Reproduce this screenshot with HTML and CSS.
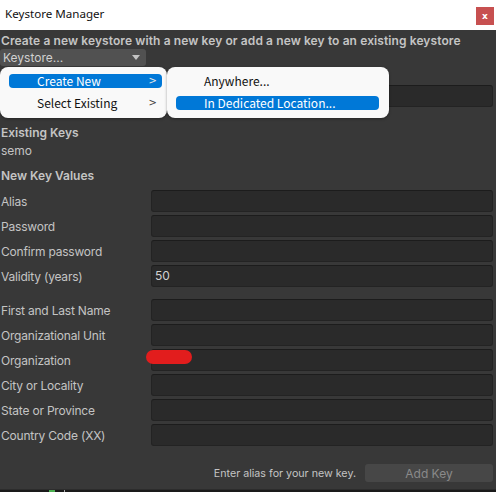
FILE: index.html
```html
<!DOCTYPE html>
<html>
<head>
<meta charset="utf-8">
<link rel="stylesheet" href="styles.css">
</head>
<body>
<div class="titlebar">
  <span class="title">Keystore Manager</span>
  <span class="close">x</span>
</div>
<div class="window">
  <div class="heading">Create a new keystore with a new key or add a new key to an existing keystore</div>
  <div class="dropdown"><span>Keystore...</span><span class="arrow"></span></div>
  <div class="row path-row"><span class="label"></span><span class="field"></span></div>
  <div class="bold existing">Existing Keys</div>
  <div class="plain">semo</div>
  <div class="bold newkey">New Key Values</div>
  <div class="group">
    <div class="row"><span class="label">Alias</span><span class="field"></span></div>
    <div class="row"><span class="label">Password</span><span class="field"></span></div>
    <div class="row"><span class="label">Confirm password</span><span class="field"></span></div>
    <div class="row"><span class="label">Validity (years)</span><span class="field">50</span></div>
  </div>
  <div class="group second">
    <div class="row"><span class="label">First and Last Name</span><span class="field"></span></div>
    <div class="row"><span class="label">Organizational Unit</span><span class="field"></span></div>
    <div class="row"><span class="label">Organization</span><span class="field"></span></div>
    <div class="row"><span class="label">City or Locality</span><span class="field"></span></div>
    <div class="row"><span class="label">State or Province</span><span class="field"></span></div>
    <div class="row"><span class="label">Country Code (XX)</span><span class="field"></span></div>
  </div>
  <div class="footer">
    <span class="hint">Enter alias for your new key.</span>
    <span class="button">Add Key</span>
  </div>
  <div class="redact"></div>
  <div class="menu menu-main">
    <div class="item active"><span>Create New</span><span class="chev">&gt;</span></div>
    <div class="item"><span>Select Existing</span><span class="chev">&gt;</span></div>
  </div>
  <div class="menu menu-sub">
    <div class="item"><span>Anywhere...</span></div>
    <div class="item active"><span>In Dedicated Location...</span></div>
  </div>
</div>
<div class="statusbar"><span class="green"></span><span class="tick"></span></div>
</body>
</html>
```
FILE: styles.css
```css
html, body {
  margin: 0;
  padding: 0;
}
body {
  width: 496px;
  height: 492px;
  overflow: hidden;
  background: #383838;
  font-family: Inter, "Noto Sans", sans-serif;
  font-size: 12px;
  color: #c4c4c4;
}
.titlebar {
  height: 30px;
  background: #ffffff;
  display: flex;
  align-items: center;
  justify-content: space-between;
  padding: 0 2px 0 5px;
  box-sizing: border-box;
}
.title {
  font-family: "Noto Sans", sans-serif;
  font-size: 11.6px;
  color: #111;
  margin-top: -3px;
}
.close {
  width: 18px;
  height: 18px;
  background: #c75050;
  color: #fff;
  font-family: "DejaVu Sans", sans-serif;
  font-size: 9px;
  font-weight: bold;
  display: flex;
  align-items: center;
  justify-content: center;
  margin-top: 2px;
}
.window {
  position: relative;
  height: 459px;
  padding: 2px 3px 0 1px;
  box-sizing: border-box;
}
.heading {
  font-weight: 600;
  height: 17px;
  line-height: 17px;
  white-space: nowrap;
  letter-spacing: 0.1px;
}
.dropdown {
  width: 146px;
  height: 17px;
  margin-left: -1px;
  background: #515151;
  border-radius: 3px;
  display: flex;
  align-items: center;
  justify-content: space-between;
  padding: 0 6px 0 3px;
  box-sizing: border-box;
  color: #d0d0d0;
}
.arrow {
  width: 0;
  height: 0;
  border-left: 4px solid transparent;
  border-right: 4px solid transparent;
  border-top: 5px solid #c4c4c4;
}
.row {
  display: flex;
  align-items: center;
  height: 22px;
  margin-bottom: 3px;
}
.label {
  width: 150px;
  flex: none;
  white-space: nowrap;
  letter-spacing: -0.2px;
}
.field {
  flex: 1;
  height: 22px;
  box-sizing: border-box;
  background: #2a2a2a;
  border: 1px solid #232323;
  border-top-color: #1c1c1c;
  border-radius: 3px;
  padding-left: 3px;
  line-height: 20px;
  color: #d2d2d2;
}
.path-row {
  margin-top: 19px;
}
.bold {
  font-weight: 600;
  height: 18px;
  line-height: 18px;
}
.existing {
  margin-top: 17px;
}
.plain {
  height: 18px;
  line-height: 18px;
}
.newkey {
  margin-top: 7px;
}
.group {
  margin-top: 5px;
}
.group.second {
  margin-top: 12px;
}
.footer {
  display: flex;
  justify-content: flex-end;
  align-items: center;
  margin-top: 18px;
}
.hint {
  font-size: 10.7px;
  color: #c4c4c4;
  margin-right: 9px;
}
.button {
  width: 128px;
  height: 18px;
  background: #474747;
  border-radius: 3px;
  color: #8a8a8a;
  font-size: 12px;
  display: flex;
  align-items: center;
  justify-content: center;
}
.redact {
  position: absolute;
  left: 146px;
  top: 320px;
  width: 46px;
  height: 14px;
  border-radius: 7px;
  background: #e21d1d;
}
.menu {
  position: absolute;
  top: 37px;
  height: 51px;
  background: #f9f9f9;
  border-radius: 8px;
  box-sizing: border-box;
  padding-top: 7px;
  box-shadow: 0 1px 3px rgba(0,0,0,0.35);
  font-family: "Noto Sans CJK KR", "Noto Sans", sans-serif;
  font-size: 12px;
  color: #111;
}
.menu-main {
  left: 0;
  width: 167px;
}
.menu-sub {
  left: 167px;
  width: 222px;
}
.item {
  display: flex;
  align-items: center;
  justify-content: space-between;
  height: 14px;
  margin-bottom: 8px;
  border-radius: 4px;
  box-sizing: border-box;
  padding-bottom: 2px;
}
.menu-main .item {
  margin-left: 9px;
  margin-right: 5px;
  padding-left: 28px;
  padding-right: 5px;
}
.menu-sub .item {
  margin-left: 9px;
  margin-right: 10px;
  padding-left: 28px;
}
.item.active {
  background: #0078d7;
  color: #fff;
}
.chev {
  font-family: "DejaVu Sans", sans-serif;
  font-size: 10px;
  color: #444;
  transform: scaleY(1.1);
}
.item.active .chev {
  color: #e6e6e6;
}
.statusbar {
  height: 3px;
  background: #1a1a1a;
  position: relative;
  border-top: 1px solid #2c2c2c;
}
.green {
  position: absolute;
  left: 49px;
  top: 0;
  width: 6px;
  height: 3px;
  background: #4caf50;
}
.tick {
  position: absolute;
  left: 64px;
  top: 0;
  width: 1px;
  height: 3px;
  background: #aaa;
}
```
